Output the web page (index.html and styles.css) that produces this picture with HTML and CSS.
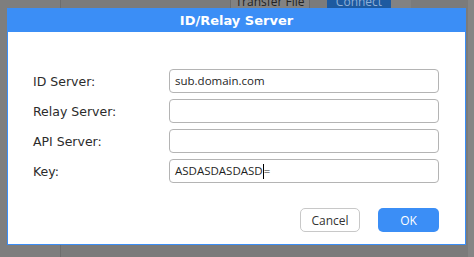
FILE: index.html
```html
<!DOCTYPE html>
<html>
<head>
<meta charset="utf-8">
<link rel="stylesheet" href="styles.css">
</head>
<body>
<div class="app">
  <div class="sidebar"></div>
  <div class="divider"></div>
  <div class="main">
    <div class="toolbar">
      <div class="tb-btn">Transfer File</div>
      <div class="tb-connect">Connect</div>
      <div class="tb-strip"></div>
    </div>
  </div>
  <div class="edge"></div>
</div>
<div class="dialog">
  <div class="header">ID/Relay Server</div>
  <div class="body">
    <div class="form">
      <label class="label">ID Server:</label>
      <div class="field">sub.domain.com</div>
      <label class="label">Relay Server:</label>
      <div class="field"></div>
      <label class="label">API Server:</label>
      <div class="field"></div>
      <label class="label">Key:</label>
      <div class="field">ASDASDASDASD<span class="caret"></span>=</div>
    </div>
    <div class="actions">
      <div class="btn cancel">Cancel</div>
      <div class="btn ok">OK</div>
    </div>
  </div>
</div>
</body>
</html>
```
FILE: styles.css
```css
html, body {
  margin: 0;
  padding: 0;
  width: 474px;
  height: 257px;
  overflow: hidden;
  background: #7a7a7a;
}
.app {
  display: flex;
  height: 257px;
}
.sidebar {
  width: 60px;
  background: #7e7e7e;
}
.divider {
  width: 1px;
  background: #6e6e6e;
}
.main {
  flex: 1;
  background: #7b7b7b;
}
.toolbar {
  display: flex;
  padding-left: 169px;
  height: 30px;
}
.tb-btn {
  width: 78px;
  height: 30px;
  background: #828282;
  border-left: 1px solid #6c6c6c;
  border-right: 1px solid #6c6c6c;
  font-family: "Open Sans", "Noto Sans", sans-serif;
  font-size: 12px;
  color: #222;
  text-align: center;
  line-height: 14px;
  margin-top: -5px;
}
.tb-connect {
  margin-left: 17px;
  width: 64px;
  height: 30px;
  background: #1d5aa0;
  font-family: "Open Sans", "Noto Sans", sans-serif;
  font-size: 12px;
  color: #8fb0d8;
  text-align: center;
  line-height: 14px;
  margin-top: -5px;
}
.tb-strip {
  width: 20px;
  background: #828282;
}
.edge {
  width: 6px;
  background: #858585;
}
.dialog {
  position: absolute;
  left: 7px;
  top: 8px;
  width: 459px;
  height: 237px;
  box-sizing: border-box;
  border: 1px solid #3b8ef6;
  background: #ffffff;
  display: flex;
  flex-direction: column;
}
.header {
  height: 23px;
  background: #3b8ef6;
  color: #ffffff;
  font-family: "DejaVu Sans", Verdana, sans-serif;
  font-weight: bold;
  font-size: 13px;
  line-height: 24px;
  text-align: center;
}
.body {
  padding: 37px 26px 12px 25px;
  display: flex;
  flex-direction: column;
}
.form {
  display: grid;
  grid-template-columns: 136px 270px;
  grid-auto-rows: 24px;
  row-gap: 6px;
  align-items: center;
}
.label {
  font-family: "DejaVu Sans", Verdana, sans-serif;
  font-size: 12.5px;
  color: #2b2b2b;
  padding-top: 1px;
}
.field {
  height: 24px;
  box-sizing: border-box;
  border: 1px solid #b4b4b4;
  border-radius: 4px;
  padding-left: 5px;
  font-family: "Open Sans", "Noto Sans", sans-serif;
  font-size: 11.5px;
  line-height: 22px;
  color: #1e1e1e;
  display: flex;
  align-items: center;
}
.caret {
  display: inline-block;
  width: 1px;
  height: 15px;
  background: #000;
}
.actions {
  margin-top: 25px;
  display: flex;
  justify-content: flex-end;
  gap: 18px;
}
.btn {
  height: 24px;
  box-sizing: border-box;
  border-radius: 5px;
  font-family: "Open Sans", "Noto Sans", sans-serif;
  font-size: 12px;
  display: flex;
  align-items: center;
  justify-content: center;
}
.cancel {
  width: 60px;
  border: 1px solid #c8c8c8;
  background: #ffffff;
  color: #333333;
}
.ok {
  width: 61px;
  background: #3b8ef6;
  color: #ffffff;
}
```
